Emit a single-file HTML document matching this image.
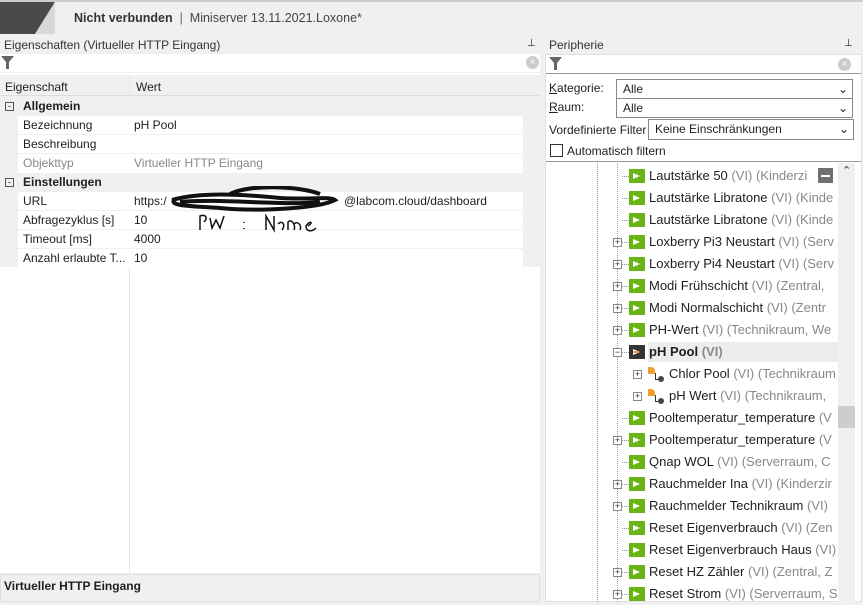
<!DOCTYPE html><html><head><meta charset="utf-8"><style>
*{margin:0;padding:0;box-sizing:border-box}
body{width:863px;height:602px;overflow:hidden;background:#f0f0f0;font-family:"Liberation Sans",sans-serif;font-size:12px;color:#1e1e1e;position:relative}
.a{position:absolute;white-space:nowrap}
.row{position:absolute;left:0;width:523px;height:19px;line-height:19px}
.row .k{position:absolute;left:23px}
.row .v{position:absolute;left:134px}
.t{position:absolute;left:0;width:838px;height:22px;line-height:22px;font-size:13px;white-space:nowrap;overflow:hidden}
.g{color:#888}
.ic{position:absolute;left:629px;top:4px;width:16px;height:14px;background:#69b516}
.ic:after{content:"";position:absolute;left:4px;top:4px;border-left:7px solid #fff;border-top:3px solid transparent;border-bottom:3px solid transparent}
.ex{position:absolute;left:613px;top:7px;width:9px;height:9px;border:1px solid #888;background:#fff;font-size:9px;line-height:7px;text-align:center;color:#333}
.dl{position:absolute;left:622px;top:11px;width:7px;border-top:1px dotted #999}
</style></head><body>
<div class="a" style="left:0;top:0;width:863px;height:34px;background:#f0f0f0;border-top:2px solid #ccc"></div>
<svg class="a" style="left:0;top:2px" width="60" height="32"><polygon points="0,0 55,0 35,32 0,32" fill="#4a4a4a"/><polygon points="55,0 35,32 55,32" fill="#d8d8d8"/></svg>
<div class="a" style="left:74px;top:11px;font-size:12.5px"><b style="color:#333">Nicht verbunden</b> &nbsp;<span style="color:#666">|</span>&nbsp; <span style="color:#444">Miniserver 13.11.2021.Loxone*</span></div>

<div class="a" style="left:4px;top:38px;color:#333">Eigenschaften (Virtueller HTTP Eingang)</div>
<div class="a" style="left:527px;top:38px;font-size:10px">⊥</div>
<div class="a" style="left:0;top:54px;width:540px;height:18px;background:#fff"></div>
<svg class="a" style="left:1px;top:56px" width="14" height="14"><polygon points="0,0 13,0 8,6 8,13 5,13 5,6" fill="#666"/></svg>
<div class="a" style="left:526px;top:56px;width:13px;height:13px;border-radius:50%;background:#ccc;color:#fff;font-size:10px;line-height:13px;text-align:center">×</div>
<div class="a" style="left:0;top:73px;width:540px;height:500px;background:#fff"></div>
<div class="a" style="left:0;top:75px;width:540px;height:21px;background:#f0f0f0;border-bottom:1px solid #ddd"></div>
<div class="a" style="left:129px;top:75px;width:1px;height:498px;background:#e6e6e6"></div>
<div class="a" style="left:5px;top:80px">Eigenschaft</div>
<div class="a" style="left:136px;top:80px">Wert</div>
<div class="a" style="left:0;top:96px;width:540px;height:171px;background:#f0f0f0"></div>
<div class="row" style="top:97px"><span class="a" style="left:5px;top:5px;width:9px;height:9px;border:1px solid #555;font-size:9px;line-height:6px;text-align:center">-</span><b class="k">Allgemein</b></div>
<div class="row" style="top:116px;left:18px;width:505px;background:#fff;border-bottom:1px solid #f0f0f0"><span class="k" style="left:5px">Bezeichnung</span><span class="v" style="left:116px">pH Pool</span></div>
<div class="row" style="top:135px;left:18px;width:505px;background:#fff;border-bottom:1px solid #f0f0f0"><span class="k" style="left:5px">Beschreibung</span></div>
<div class="row" style="top:154px;left:18px;width:505px;background:#fff;color:#888"><span class="k" style="left:5px">Objekttyp</span><span class="v" style="left:116px">Virtueller HTTP Eingang</span></div>
<div class="row" style="top:173px"><span class="a" style="left:5px;top:5px;width:9px;height:9px;border:1px solid #555;font-size:9px;line-height:6px;text-align:center">-</span><b class="k">Einstellungen</b></div>
<div class="row" style="top:192px;left:18px;width:505px;background:#fff;border-bottom:1px solid #f0f0f0"><span class="k" style="left:5px">URL</span><span class="v" style="left:116px">https:/</span><span class="a" style="left:326px">@labcom.cloud/dashboard</span></div>
<div class="row" style="top:211px;left:18px;width:505px;background:#fff;border-bottom:1px solid #f0f0f0"><span class="k" style="left:5px">Abfragezyklus [s]</span><span class="v" style="left:116px">10</span></div>
<div class="row" style="top:230px;left:18px;width:505px;background:#fff;border-bottom:1px solid #f0f0f0"><span class="k" style="left:5px">Timeout [ms]</span><span class="v" style="left:116px">4000</span></div>
<div class="row" style="top:249px;left:18px;width:505px;background:#fff"><span class="k" style="left:5px">Anzahl erlaubte T...</span><span class="v" style="left:116px">10</span></div>
<svg class="a" style="left:160px;top:186px" width="180" height="56"><path d="M12,14 C40,6 80,8 120,12 C150,14 170,10 175,14 C160,22 100,26 60,22 C30,20 10,20 14,14 M20,16 C60,12 120,20 160,16 M70,8 C90,-2 140,0 160,8" stroke="#111" stroke-width="4" fill="none"/><path d="M40,44 L40,30 C46,28 48,32 44,36 M50,32 L52,42 L56,34 L60,42 L64,30 M84,36 l0,1 M84,42 l0,1 M106,44 L106,30 L114,44 L114,30 M118,38 C122,34 126,38 122,44 M128,44 L128,36 C132,32 136,40 134,44 M134,38 C138,34 142,40 140,44 M148,40 C154,36 150,34 146,40 C146,46 152,46 156,42" stroke="#111" stroke-width="1.5" fill="none"/></svg>
<div class="a" style="left:0;top:574px;width:540px;height:28px;background:#f0f0f0;border:1px solid #e0e0e0"></div>
<b class="a" style="left:4px;top:579px">Virtueller HTTP Eingang</b>

<div class="a" style="left:549px;top:38px;color:#333">Peripherie</div>
<div class="a" style="left:844px;top:38px;font-size:10px">⊥</div>
<div class="a" style="left:545px;top:54px;width:317px;height:548px;background:#fff;border:1px solid #e0e0e0"></div>
<svg class="a" style="left:549px;top:57px" width="14" height="14"><polygon points="0,0 13,0 8,6 8,13 5,13 5,6" fill="#666"/></svg>
<div class="a" style="left:838px;top:58px;width:13px;height:13px;border-radius:50%;background:#ccc;color:#fff;font-size:10px;line-height:13px;text-align:center">×</div>
<div class="a" style="left:546px;top:73px;width:315px;height:1px;background:#999"></div>
<div class="a" style="left:549px;top:81px"><u>K</u>ategorie:</div>
<div class="a" style="left:616px;top:79px;width:237px;height:20px;border:1px solid #888;padding-left:6px;line-height:18px">Alle<span class="a" style="right:4px;top:0">⌄</span></div>
<div class="a" style="left:549px;top:100px"><u>R</u>aum:</div>
<div class="a" style="left:616px;top:98px;width:237px;height:20px;border:1px solid #888;padding-left:6px;line-height:18px">Alle<span class="a" style="right:4px;top:0">⌄</span></div>
<div class="a" style="left:549px;top:123px">Vordefinierte Filter</div>
<div class="a" style="left:648px;top:119px;width:206px;height:21px;border:1px solid #888;padding-left:6px;line-height:19px">Keine Einschränkungen<span class="a" style="right:4px;top:0">⌄</span></div>
<div class="a" style="left:550px;top:144px;width:13px;height:13px;border:1px solid #333"></div>
<div class="a" style="left:567px;top:144px">Automatisch filtern</div>
<div class="a" style="left:546px;top:161px;width:315px;height:1px;background:#999"></div>
<div class="a" style="left:597px;top:163px;height:439px;border-left:1px dotted #999"></div>
<div class="a" style="left:617px;top:163px;height:439px;border-left:1px dotted #999"></div>
<div class="a" style="left:0;top:165px;width:838px;height:437px">
<div class="t" style="top:0"><span class="dl"></span><span class="ic"></span><span class="a" style="left:649px">Lautstärke 50 <span class="g">(VI) (Kinderzi</span></span><span class="a" style="left:818px;top:3px;width:15px;height:15px;background:#6f6f6f"><span class="a" style="left:3px;top:7px;width:9px;height:2px;background:#fff"></span></span></div>
<div class="t" style="top:22px"><span class="dl"></span><span class="ic"></span><span class="a" style="left:649px">Lautstärke Libratone <span class="g">(VI) (Kinde</span></span></div>
<div class="t" style="top:44px"><span class="dl"></span><span class="ic"></span><span class="a" style="left:649px">Lautstärke Libratone <span class="g">(VI) (Kinde</span></span></div>
<div class="t" style="top:66px"><span class="ex">+</span><span class="dl"></span><span class="ic"></span><span class="a" style="left:649px">Loxberry Pi3 Neustart <span class="g">(VI) (Serv</span></span></div>
<div class="t" style="top:88px"><span class="ex">+</span><span class="dl"></span><span class="ic"></span><span class="a" style="left:649px">Loxberry Pi4 Neustart <span class="g">(VI) (Serv</span></span></div>
<div class="t" style="top:110px"><span class="ex">+</span><span class="dl"></span><span class="ic"></span><span class="a" style="left:649px">Modi Frühschicht <span class="g">(VI) (Zentral,</span></span></div>
<div class="t" style="top:132px"><span class="ex">+</span><span class="dl"></span><span class="ic"></span><span class="a" style="left:649px">Modi Normalschicht <span class="g">(VI) (Zentr</span></span></div>
<div class="t" style="top:154px"><span class="ex">+</span><span class="dl"></span><span class="ic"></span><span class="a" style="left:649px">PH-Wert <span class="g">(VI) (Technikraum, We</span></span></div>
<div class="t" style="top:176px"><span class="a" style="left:648px;top:1px;width:190px;height:20px;background:#ececec"></span><span class="ex">−</span><span class="dl"></span><span class="ic" style="background:#333"></span><span class="a" style="left:633px;top:10px;width:5px;height:2px;background:#f0a030"></span><span class="a" style="left:649px;font-weight:bold">pH Pool <span class="g">(VI)</span></span></div>
<div class="t" style="top:198px"><span class="ex" style="left:633px">+</span><span class="a" style="left:648px;top:4px;width:7px;height:7px;background:#f0a030;border-radius:0 4px 0 0"></span><span class="a" style="left:655px;top:10px;width:6px;height:7px;border-left:1px solid #333;border-bottom:1px solid #333"></span><span class="a" style="left:658px;top:13px;width:6px;height:6px;background:#444;border-radius:50%"></span><span class="a" style="left:669px">Chlor Pool <span class="g">(VI) (Technikraum</span></span></div>
<div class="t" style="top:220px"><span class="ex" style="left:633px">+</span><span class="a" style="left:648px;top:4px;width:7px;height:7px;background:#f0a030;border-radius:0 4px 0 0"></span><span class="a" style="left:655px;top:10px;width:6px;height:7px;border-left:1px solid #333;border-bottom:1px solid #333"></span><span class="a" style="left:658px;top:13px;width:6px;height:6px;background:#444;border-radius:50%"></span><span class="a" style="left:669px">pH Wert <span class="g">(VI) (Technikraum,</span></span></div>
<div class="t" style="top:242px"><span class="dl"></span><span class="ic"></span><span class="a" style="left:649px">Pooltemperatur_temperature <span class="g">(V</span></span></div>
<div class="t" style="top:264px"><span class="ex">+</span><span class="dl"></span><span class="ic"></span><span class="a" style="left:649px">Pooltemperatur_temperature <span class="g">(V</span></span></div>
<div class="t" style="top:286px"><span class="dl"></span><span class="ic"></span><span class="a" style="left:649px">Qnap WOL <span class="g">(VI) (Serverraum, C</span></span></div>
<div class="t" style="top:308px"><span class="ex">+</span><span class="dl"></span><span class="ic"></span><span class="a" style="left:649px">Rauchmelder Ina <span class="g">(VI) (Kinderzir</span></span></div>
<div class="t" style="top:330px"><span class="ex">+</span><span class="dl"></span><span class="ic"></span><span class="a" style="left:649px">Rauchmelder Technikraum <span class="g">(VI)</span></span></div>
<div class="t" style="top:352px"><span class="dl"></span><span class="ic"></span><span class="a" style="left:649px">Reset Eigenverbrauch <span class="g">(VI) (Zen</span></span></div>
<div class="t" style="top:374px"><span class="dl"></span><span class="ic"></span><span class="a" style="left:649px">Reset Eigenverbrauch Haus <span class="g">(VI)</span></span></div>
<div class="t" style="top:396px"><span class="ex">+</span><span class="dl"></span><span class="ic"></span><span class="a" style="left:649px">Reset HZ Zähler <span class="g">(VI) (Zentral, Z</span></span></div>
<div class="t" style="top:418px"><span class="ex">+</span><span class="dl"></span><span class="ic"></span><span class="a" style="left:649px">Reset Strom <span class="g">(VI) (Serverraum, S</span></span></div>
</div>
<div class="a" style="left:838px;top:163px;width:17px;height:439px;background:#f0f0f0"></div>
<div class="a" style="left:842px;top:164px;font-size:11px;color:#333">⌃</div>
<div class="a" style="left:838px;top:406px;width:17px;height:22px;background:#cdcdcd"></div>
</body></html>
